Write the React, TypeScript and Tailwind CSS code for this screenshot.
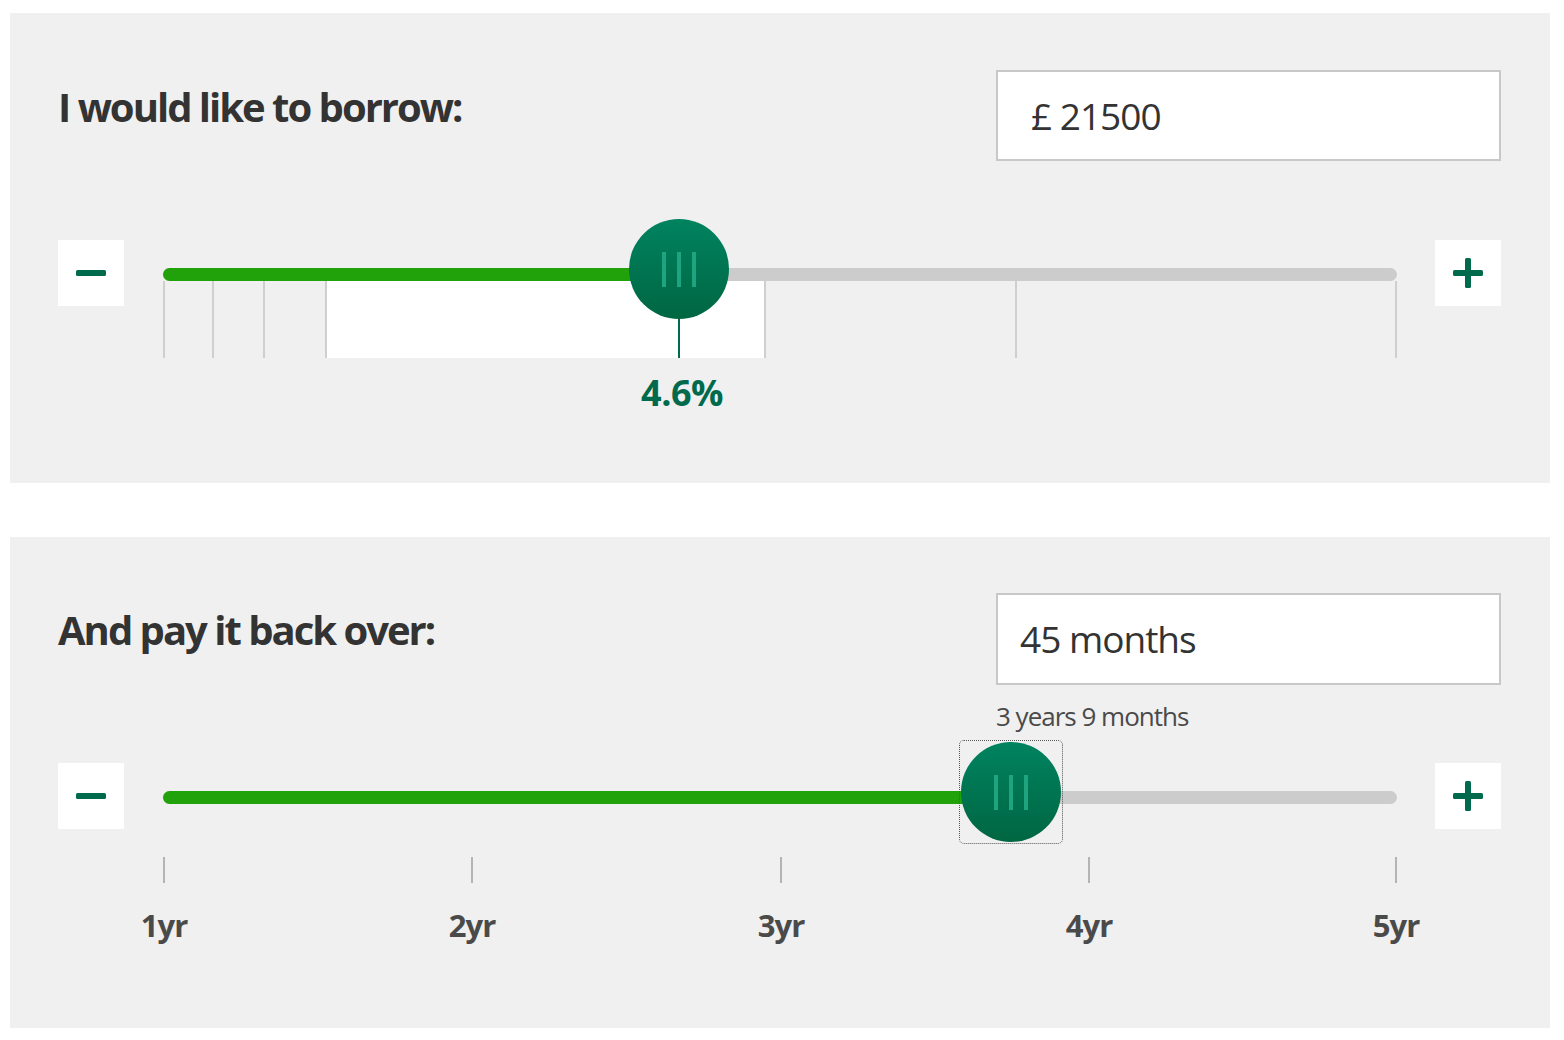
import React from "react";

const FONT = { fontFamily: '"Open Sans", "Noto Sans", sans-serif' };

const StepButton = ({ kind }: { kind: "minus" | "plus" }) => (
  <button className="flex h-[66px] w-[66px] shrink-0 items-center justify-center bg-white">
    <svg width="32" height="32" viewBox="0 0 32 32">
      <rect x="1" y="13" width="30" height="6" rx="1.5" fill="#006a4d" />
      {kind === "plus" && <rect x="13" y="1" width="6" height="30" rx="1.5" fill="#006a4d" />}
    </svg>
  </button>
);

const Handle = ({ focused }: { focused?: boolean }) => (
  <div className="relative h-[100px] w-[100px]">
    {focused && (
      <div className="absolute -inset-[2px] rounded-[5px] border border-dotted border-[#555]" />
    )}
    <div className="flex h-[100px] w-[100px] items-center justify-center gap-[11px] rounded-full bg-gradient-to-b from-[#008360] to-[#006642]">
      <span className="h-[35px] w-[4px] bg-[#1ea57f]" />
      <span className="h-[35px] w-[4px] bg-[#1ea57f]" />
      <span className="h-[35px] w-[4px] bg-[#1ea57f]" />
    </div>
  </div>
);

const BorrowSlider = () => {
  const pos = 679 - 163;
  const rateTicks = [164, 213, 264, 326, 765, 1016, 1396].map((x) => x - 163);
  return (
    <div className="flex items-start gap-[38px]">
      <StepButton kind="minus" />
      <div className="relative ml-px h-[190px] w-[1234px]">
        {/* track */}
        <div className="absolute left-0 top-[28px] flex h-[13px] w-full overflow-hidden rounded-full bg-[#cccccc]">
          <div className="h-full bg-[#22a20a]" style={{ width: pos }} />
        </div>
        {/* band under track */}
        <div
          className="absolute top-[41px] h-[77px] bg-white"
          style={{ left: 326 - 163, width: 765 - 326 }}
        />
        {rateTicks.map((x) => (
          <div key={x} className="absolute top-[41px] h-[77px] w-[2px] bg-[#cfcfcf]" style={{ left: x - 1 }} />
        ))}
        <div className="absolute top-[70px] h-[48px] w-[2px] bg-[#006a4d]" style={{ left: pos - 1 }} />
        <div className="absolute -top-[21px]" style={{ left: pos - 50 }}>
          <Handle />
        </div>
        <div
          className="absolute top-[129px] w-[120px] text-center text-[36px] font-bold leading-[48px] tracking-[-0.5px] text-[#006a4d]"
          style={{ left: pos + 3 - 60, ...FONT }}
        >
          4.6%
        </div>
      </div>
      <StepButton kind="plus" />
    </div>
  );
};

const TermSlider = () => {
  const pos = 1011 - 163;
  const ticks = [
    { x: 164, label: "1yr" },
    { x: 472, label: "2yr" },
    { x: 781, label: "3yr" },
    { x: 1089, label: "4yr" },
    { x: 1396, label: "5yr" },
  ];
  return (
    <div className="flex items-start gap-[38px]">
      <StepButton kind="minus" />
      <div className="relative ml-px h-[190px] w-[1234px]">
        <div className="absolute left-0 top-[28px] flex h-[13px] w-full overflow-hidden rounded-full bg-[#cccccc]">
          <div className="h-full bg-[#22a20a]" style={{ width: pos }} />
        </div>
        <div className="absolute -top-[21px]" style={{ left: pos - 50 }}>
          <Handle focused />
        </div>
        {ticks.map((t) => (
          <div key={t.x} className="absolute top-[94px] flex w-[100px] flex-col items-center" style={{ left: t.x - 163 - 50 }}>
            <div className="h-[26px] w-[2px] bg-[#b4b4b4]" />
            <div className="mt-[22px] text-[31px] font-bold leading-[40px] tracking-[-1px] text-[#4a4a4a]" style={FONT}>
              {t.label}
            </div>
          </div>
        ))}
      </div>
      <StepButton kind="plus" />
    </div>
  );
};

export default function App() {
  return (
    <div className="min-h-[1040px] bg-white pt-[13px]" style={FONT}>
      <div className="ml-[10px] flex w-[1540px] flex-col gap-[54px]">
        <section className="h-[470px] bg-[#f0f0f0] pl-[48px] pr-[49px] pt-[57px]">
          <div className="flex items-start justify-between">
            <h2 className="mt-[12px] text-[40px] font-bold leading-[50px] tracking-[-2px] text-[#333333]">
              I would like to borrow:
            </h2>
            <div className="flex h-[91px] w-[505px] items-center border-2 border-[#c8c8c8] bg-white pl-[33px] text-[37px] tracking-[-1px] text-[#333333]">
              £ 21500
            </div>
          </div>
          <div className="mt-[79px]">
            <BorrowSlider />
          </div>
        </section>
        <section className="h-[491px] bg-[#f0f0f0] pl-[48px] pr-[49px] pt-[56px]">
          <div className="flex items-start justify-between">
            <h2 className="mt-[12px] text-[40px] font-bold leading-[50px] tracking-[-2px] text-[#333333]">
              And pay it back over:
            </h2>
            <div className="w-[505px]">
              <div className="flex h-[92px] items-center border-2 border-[#c8c8c8] bg-white pl-[22px] text-[37px] tracking-[-1px] text-[#333333]">
                45 months
              </div>
              <div className="mt-[13px] text-[26px] leading-[36px] tracking-[-1px] text-[#4a4a4a]">
                3 years 9 months
              </div>
            </div>
          </div>
          <div className="mt-[29px]">
            <TermSlider />
          </div>
        </section>
      </div>
    </div>
  );
}
